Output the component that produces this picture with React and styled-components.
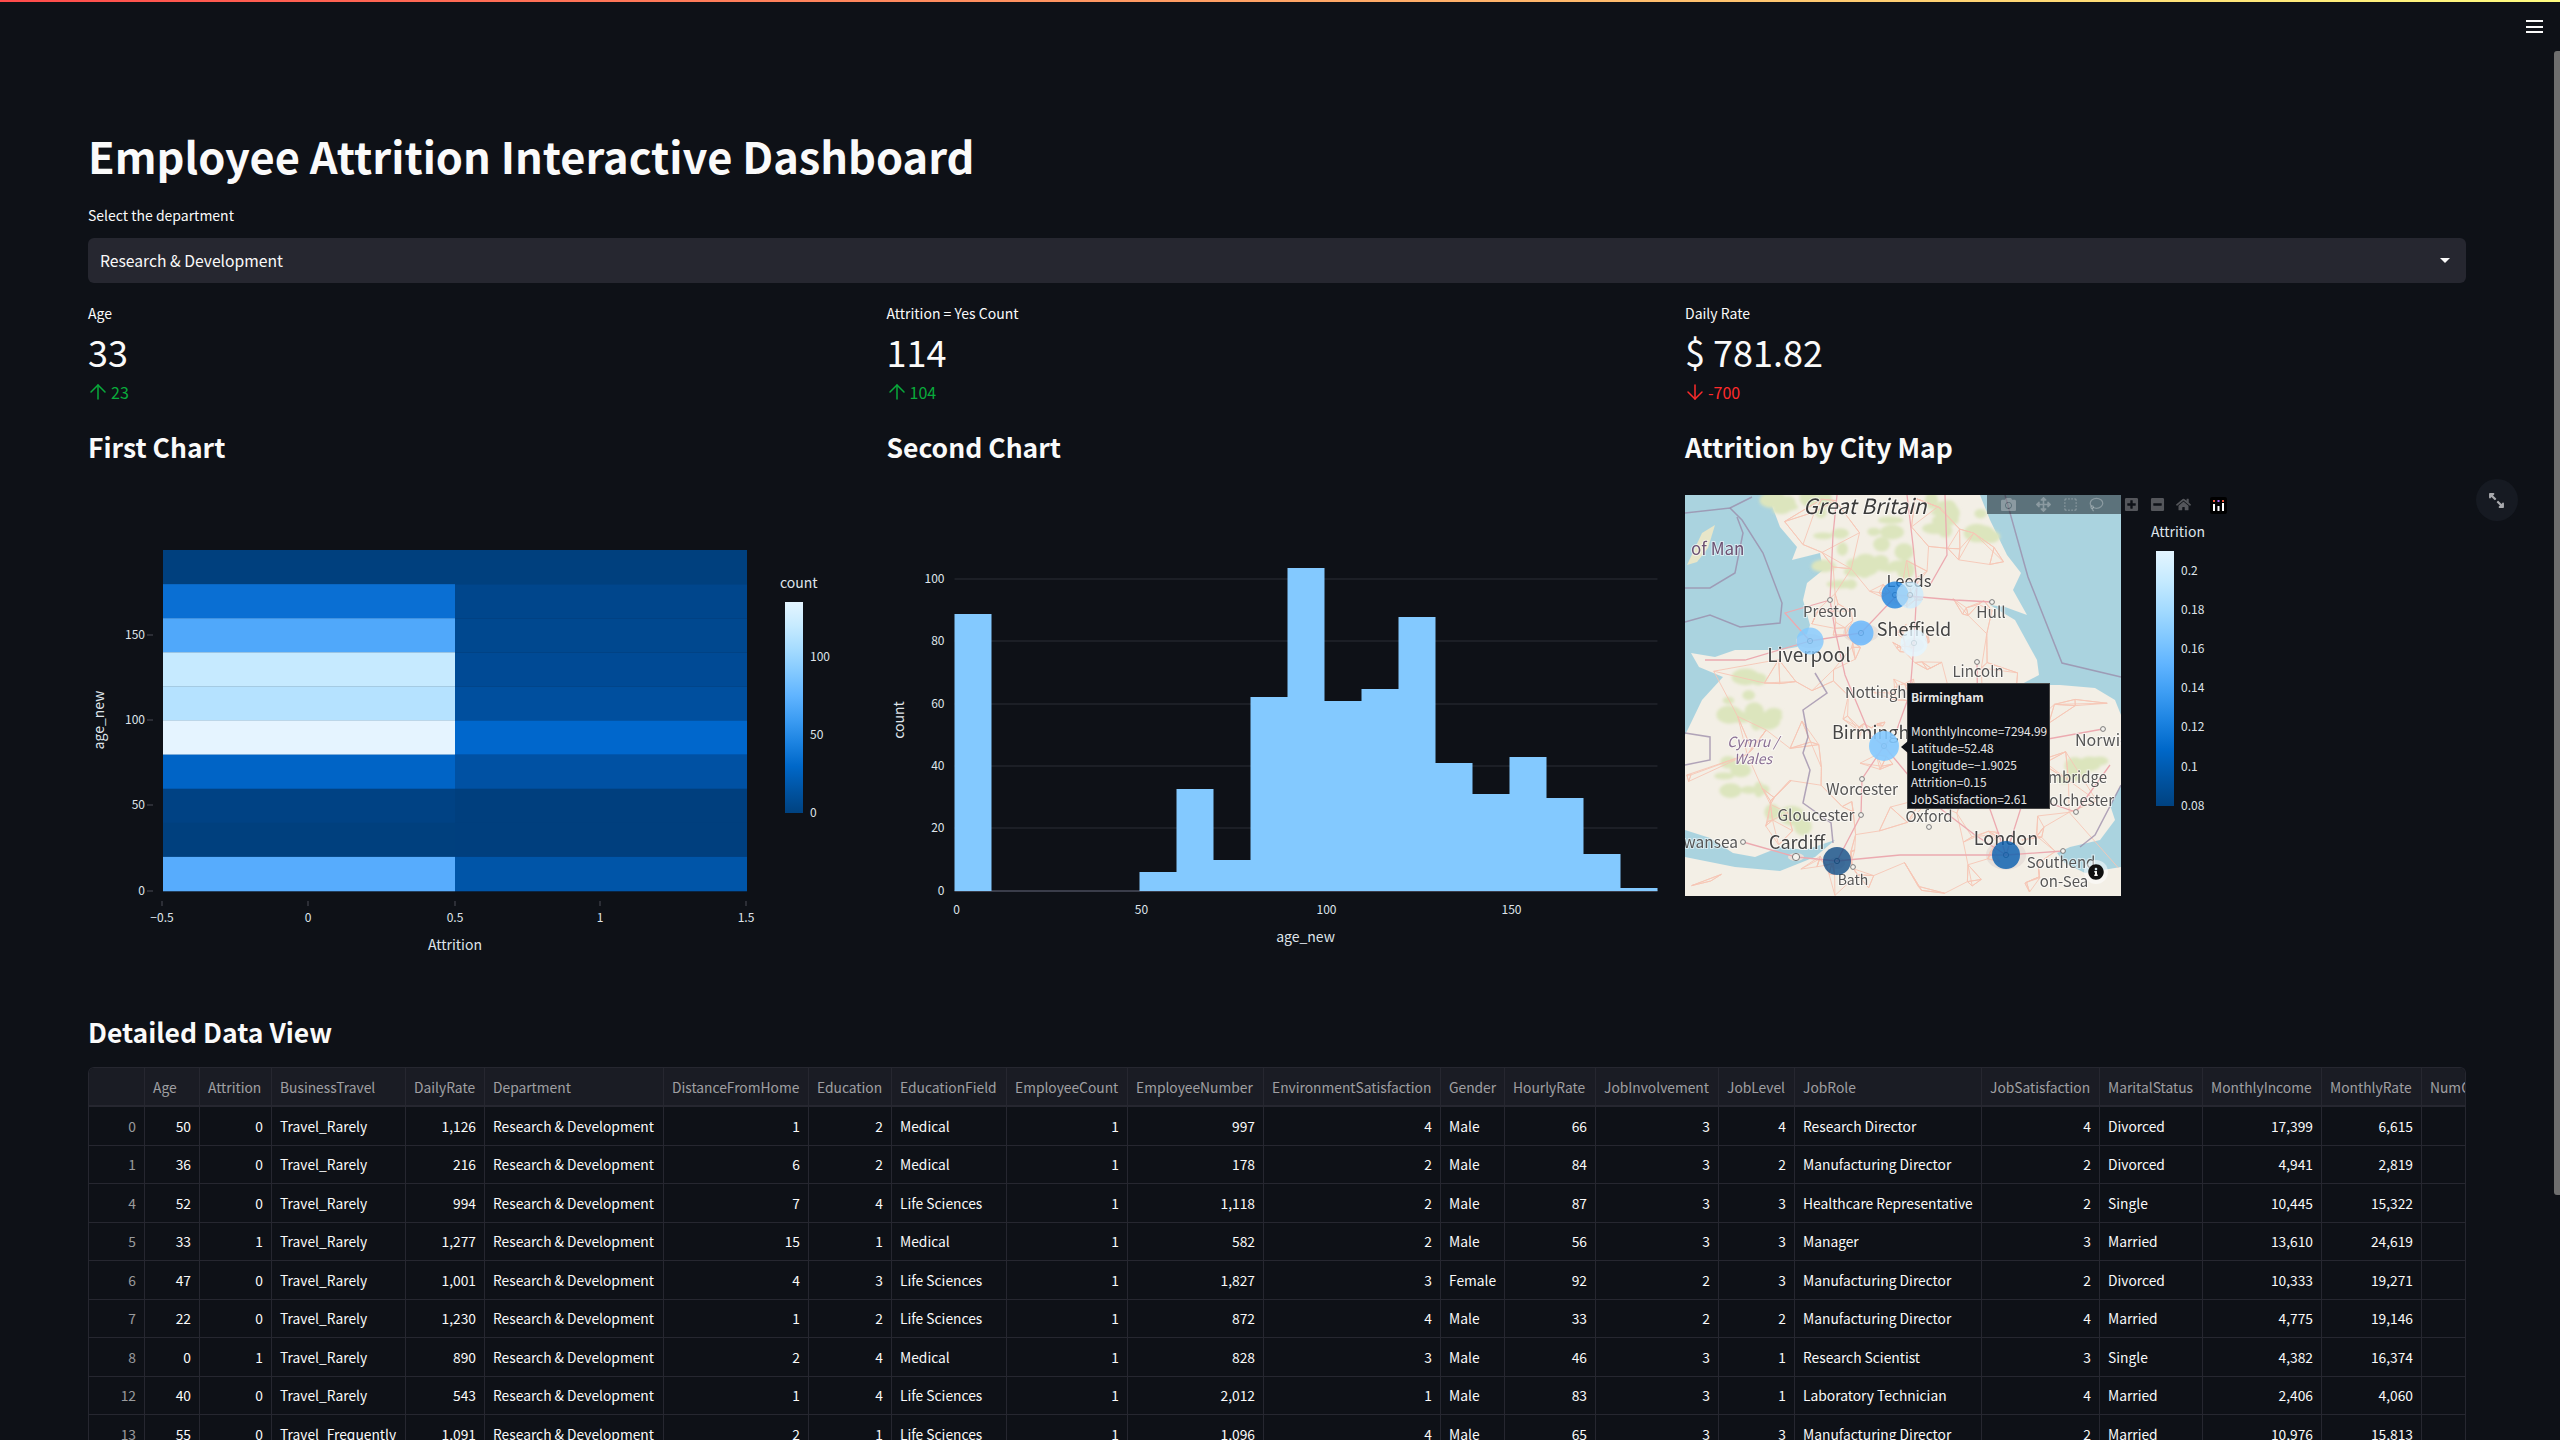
import React from 'react';
import styled, { createGlobalStyle } from 'styled-components';
import { ArrowUp, ArrowDown, Lasso, SquareDashed } from 'lucide-react';
import { FaCamera, FaArrowsAlt, FaHome, FaPlusSquare, FaMinusSquare, FaInfoCircle, FaExpandAlt } from 'react-icons/fa';

const FONT = '"Noto Sans CJK JP", "Source Sans Pro", Lato, sans-serif';

const GlobalStyle = createGlobalStyle`
    html, body {
        margin: 0;
        height: 100%;
        background: #0e1117;
        overflow: hidden;
    }
    * { box-sizing: border-box; }
`;

const Page = styled.div`
    position: relative;
    height: 1440px;
    overflow: hidden;
    background: #0e1117;
    color: #fafafa;
    font-family: ${FONT};
`;

const TopBar = styled.div`
    height: 2px;
    background: linear-gradient(90deg, #ff4b4b, #fffd80);
`;

const Menu = styled.div`
    position: absolute;
    top: 20px;
    right: 17px;
    width: 17px;
    height: 13px;
    border-top: 2px solid #fafafa;
    border-bottom: 2px solid #fafafa;
    &::after {
        content: '';
        display: block;
        margin-top: 3.5px;
        height: 2px;
        background: #fafafa;
    }
`;

const ScrollThumb = styled.div`
    position: absolute;
    top: 51px;
    right: 0;
    width: 6px;
    height: 1144px;
    border-radius: 3px 0 0 3px;
    background: #6e6e6e;
`;

const ExpandButton = styled.div`
    position: absolute;
    top: 479px;
    left: 2476px;
    width: 42px;
    height: 42px;
    border-radius: 50%;
    background: #161a22;
    color: #a8a9ad;
    display: flex;
    align-items: center;
    justify-content: center;
    font-size: 17px;
    transform: scaleX(-1);
`;

const Main = styled.main`
    padding: 126px 94px 0 88px;
`;

const Title = styled.h1`
    margin: 0;
    font-size: 43.4px;
    line-height: 54px;
    font-weight: 700;
`;

const FieldLabel = styled.label`
    display: block;
    margin-top: 23px;
    font-size: 14px;
    line-height: 20px;
`;

const SelectBox = styled.div`
    margin-top: 13px;
    height: 45px;
    padding: 0 12px;
    display: flex;
    align-items: center;
    justify-content: space-between;
    border-radius: 6px;
    background: #262730;
    font-size: 15.7px;
`;

const Caret = styled.span`
    width: 0;
    height: 0;
    margin-right: 4px;
    border-left: 5px solid transparent;
    border-right: 5px solid transparent;
    border-top: 5px solid #fafafa;
`;

const Columns = styled.div`
    display: grid;
    grid-template-columns: repeat(3, 782px);
    column-gap: 16.5px;
`;

const Metrics = styled(Columns)`
    margin-top: 20px;
`;

const MetricLabel = styled.div`
    font-size: 14px;
    line-height: 20px;
`;

const MetricValue = styled.div`
    margin-top: 6px;
    font-size: 36px;
    line-height: 45px;
`;

const MetricDelta = styled.div`
    margin-top: 8px;
    margin-left: -2px;
    height: 20px;
    display: flex;
    align-items: center;
    gap: 1px;
    font-size: 16px;
    line-height: 20px;
    color: ${(p) => (p.$down ? '#ff2b2b' : '#09ab3b')};
`;

const SectionTitle = styled.h3`
    margin: 0;
    font-size: 26.5px;
    line-height: 38px;
    font-weight: 600;
`;

const ChartsRow = styled(Columns)`
    margin-top: 26px;
`;

const ChartSvg = styled.svg`
    display: block;
    margin-top: 9px;
    width: 782px;
    height: 500px;
    font-family: ${FONT};
`;

const MapPanel = styled.div`
    position: relative;
    margin-top: 29px;
    width: 782px;
    height: 480px;
`;

const MapSvg = styled.svg`
    display: block;
    width: 436px;
    height: 401px;
    font-family: ${FONT};
`;

const LegendSvg = styled.svg`
    position: absolute;
    left: 450px;
    top: 18px;
    width: 100px;
    height: 310px;
    font-family: ${FONT};
`;

const Modebar = styled.div`
    position: absolute;
    left: 302px;
    top: 0;
    width: 246px;
    height: 19px;
    display: flex;
    align-items: center;
    background: rgba(14, 17, 23, 0.5);
`;

const ModeIcon = styled.span`
    position: absolute;
    left: ${(p) => p.$x}px;
    top: 2px;
    display: flex;
    font-size: ${(p) => p.$size || 15}px;
    color: rgba(250, 250, 250, 0.3);
`;

const Tooltip = styled.div`
    position: absolute;
    left: 222px;
    top: 188px;
    width: 143px;
    height: 126px;
    padding: 4px 0 0 3px;
    background: #0e1117;
    border: 1px solid #444;
    font-size: 11.9px;
    line-height: 17px;
    color: #e6e6e6;
    white-space: pre;
    &::before {
        content: '';
        position: absolute;
        left: -7px;
        top: 57px;
        border-top: 6px solid transparent;
        border-bottom: 6px solid transparent;
        border-right: 7px solid #0e1117;
    }
`;

const TipTitle = styled.b`
    font-weight: 700;
`;

const InfoHalo = styled.span`
    position: absolute;
    left: 399px;
    top: 365px;
    width: 24px;
    height: 24px;
    border-radius: 50%;
    background: rgba(255, 255, 255, 0.5);
    color: #111;
    display: flex;
    align-items: center;
    justify-content: center;
    font-size: 16px;
`;

const DataTitle = styled(SectionTitle)`
    margin-top: 38px;
`;

const TableWrap = styled.div`
    margin-top: 16px;
    border: 1px solid #262730;
    border-bottom: 0;
    border-radius: 6px 6px 0 0;
    overflow: hidden;
`;

const COLUMN_WIDTHS = [56, 55, 72, 134, 79, 179, 145, 83, 115, 121, 136, 177, 64, 91, 123, 76, 187, 118, 103, 119, 100, 150];

const TableGrid = styled.div`
    display: grid;
    width: max-content;
    grid-template-columns: ${COLUMN_WIDTHS.map((w) => w + 'px').join(' ')};
    grid-template-rows: 39px;
    grid-auto-rows: 38.5px;
    font-size: 13.8px;
`;

const Cell = styled.div`
    display: flex;
    align-items: center;
    justify-content: ${(p) => (p.$num ? 'flex-end' : 'flex-start')};
    padding: 0 8px;
    white-space: nowrap;
    overflow: hidden;
    border-right: 1px solid #262730;
    border-bottom: 1px solid #262730;
    color: ${(p) => (p.$index ? 'rgba(250,250,250,0.6)' : '#fafafa')};
`;

const HeadCell = styled(Cell)`
    background: #1a1c24;
    color: rgba(250, 250, 250, 0.6);
    border-bottom-width: 2px;
`;

const columns = [
    ['', 0], ['Age', 1], ['Attrition', 1], ['BusinessTravel', 0], ['DailyRate', 1], ['Department', 0],
    ['DistanceFromHome', 1], ['Education', 1], ['EducationField', 0], ['EmployeeCount', 1], ['EmployeeNumber', 1],
    ['EnvironmentSatisfaction', 1], ['Gender', 0], ['HourlyRate', 1], ['JobInvolvement', 1], ['JobLevel', 1],
    ['JobRole', 0], ['JobSatisfaction', 1], ['MaritalStatus', 0], ['MonthlyIncome', 1], ['MonthlyRate', 1], ['NumCompaniesWorked', 1],
];

const RD = 'Research & Development';
const rows = [
    ['0', '50', '0', 'Travel_Rarely', '1,126', RD, '1', '2', 'Medical', '1', '997', '4', 'Male', '66', '3', '4', 'Research Director', '4', 'Divorced', '17,399', '6,615', ''],
    ['1', '36', '0', 'Travel_Rarely', '216', RD, '6', '2', 'Medical', '1', '178', '2', 'Male', '84', '3', '2', 'Manufacturing Director', '2', 'Divorced', '4,941', '2,819', ''],
    ['4', '52', '0', 'Travel_Rarely', '994', RD, '7', '4', 'Life Sciences', '1', '1,118', '2', 'Male', '87', '3', '3', 'Healthcare Representative', '2', 'Single', '10,445', '15,322', ''],
    ['5', '33', '1', 'Travel_Rarely', '1,277', RD, '15', '1', 'Medical', '1', '582', '2', 'Male', '56', '3', '3', 'Manager', '3', 'Married', '13,610', '24,619', ''],
    ['6', '47', '0', 'Travel_Rarely', '1,001', RD, '4', '3', 'Life Sciences', '1', '1,827', '3', 'Female', '92', '2', '3', 'Manufacturing Director', '2', 'Divorced', '10,333', '19,271', ''],
    ['7', '22', '0', 'Travel_Rarely', '1,230', RD, '1', '2', 'Life Sciences', '1', '872', '4', 'Male', '33', '2', '2', 'Manufacturing Director', '4', 'Married', '4,775', '19,146', ''],
    ['8', '0', '1', 'Travel_Rarely', '890', RD, '2', '4', 'Medical', '1', '828', '3', 'Male', '46', '3', '1', 'Research Scientist', '3', 'Single', '4,382', '16,374', ''],
    ['12', '40', '0', 'Travel_Rarely', '543', RD, '1', '4', 'Life Sciences', '1', '2,012', '1', 'Male', '83', '3', '1', 'Laboratory Technician', '4', 'Married', '2,406', '4,060', ''],
    ['13', '55', '0', 'Travel_Frequently', '1,091', RD, '2', '1', 'Life Sciences', '1', '1,096', '4', 'Male', '65', '3', '3', 'Manufacturing Director', '2', 'Married', '10,976', '15,813', ''],
];

const metrics = [
    { label: 'Age', value: '33', delta: '23' },
    { label: 'Attrition = Yes Count', value: '114', delta: '104' },
    { label: 'Daily Rate', value: '$ 781.82', delta: '-700', down: true },
];

const TICK = '#dfe4ea';
const BLUES = ['#e4f5ff', '#c7ebff', '#a6dcff', '#83c9ff', '#60b4ff', '#3d9df3', '#1c83e1', '#0068c9', '#0054a3', '#004280'];

function GradientStops() {
    return BLUES.map((c, i) => <stop key={c} offset={i / (BLUES.length - 1)} stopColor={c} />);
}

const heatRows = [
    ['#00407e', '#00407e'],
    ['#0a6fd3', '#00468c'],
    ['#50a8fa', '#00488f'],
    ['#c6eaff', '#004a95'],
    ['#b5e2ff', '#004f9e'],
    ['#e5f4ff', '#0067cc'],
    ['#0064c6', '#0051a3'],
    ['#004284', '#003f7e'],
    ['#00407e', '#003f7e'],
    ['#57acfd', '#0055a8'],
];

function HeatChart() {
    const top = 550;
    const rowH = 34.1;
    return (
        <ChartSvg viewBox="88 475 782 500">
            <defs>
                <linearGradient id="heatbar" x1="0" y1="0" x2="0" y2="1"><GradientStops /></linearGradient>
            </defs>
            {heatRows.map((r, i) => (
                <g key={i}>
                    <rect x="163" y={top + i * rowH} width="292" height={rowH + 0.3} fill={r[0]} />
                    <rect x="455" y={top + i * rowH} width="292" height={rowH + 0.3} fill={r[1]} />
                </g>
            ))}
            {[[150, 635], [100, 720], [50, 805], [0, 891]].map(([t, y]) => (
                <g key={t}>
                    <line x1="147" x2="153" y1={y} y2={y} stroke="#4a4d57" />
                    <text x="145" y={y + 4} textAnchor="end" fontSize="12" fill={TICK}>{t}</text>
                </g>
            ))}
            {[['−0.5', 162], ['0', 308], ['0.5', 455], ['1', 600], ['1.5', 746]].map(([t, x]) => (
                <g key={t}>
                    <line x1={x} x2={x} y1="901" y2="906" stroke="#4a4d57" />
                    <text x={x} y="922" textAnchor="middle" fontSize="12" fill={TICK}>{t}</text>
                </g>
            ))}
            <text x="455" y="950" textAnchor="middle" fontSize="14" fill={TICK}>Attrition</text>
            <text transform="translate(104 720) rotate(-90)" textAnchor="middle" fontSize="14" fill={TICK}>age_new</text>
            <text x="780" y="588" fontSize="14" fill={TICK}>count</text>
            <rect x="785" y="602" width="18" height="211" fill="url(#heatbar)" />
            {[[100, 657], [50, 735], [0, 813]].map(([t, y]) => (
                <text key={t} x="810" y={y + 4} fontSize="12" fill={TICK}>{t}</text>
            ))}
        </ChartSvg>
    );
}

const histTops = [614, 891, 891, 891, 891, 872, 789, 860, 697, 568, 701, 689, 617, 763, 794, 757, 798, 854, 888];

function HistChart() {
    const x0 = 954;
    const step = 37;
    let d = `M${x0} 891`;
    histTops.forEach((t, i) => {
        d += ` L${x0 + i * step} ${t} L${x0 + (i + 1) * step} ${t}`;
    });
    d += ` L${x0 + histTops.length * step} 891 Z`;
    return (
        <ChartSvg viewBox="886.5 475 782 500">
            {[[100, 579], [80, 641], [60, 704], [40, 766], [20, 828], [0, 891]].map(([t, y]) => (
                <g key={t}>
                    <line x1="954" x2="1657" y1={y} y2={y} stroke={t === 0 ? '#3a3d4a' : '#2b2e37'} strokeWidth={t === 0 ? 2 : 1} />
                    <text x="944" y={y + 4} textAnchor="end" fontSize="12" fill={TICK}>{t}</text>
                </g>
            ))}
            <path d={d} fill="#83c9ff" />
            {[[0, 956], [50, 1141], [100, 1326], [150, 1511]].map(([t, x]) => (
                <text key={t} x={x} y="914" textAnchor="middle" fontSize="12" fill={TICK}>{t}</text>
            ))}
            <text x="1305" y="942" textAnchor="middle" fontSize="14" fill={TICK}>age_new</text>
            <text transform="translate(903 720) rotate(-90)" textAnchor="middle" fontSize="14" fill={TICK}>count</text>
        </ChartSvg>
    );
}

const LAND = 'M83 0 L295 0 L305 25 L322 60 L336 78 L328 95 L342 120 L320 112 L305 110 L330 125 L352 165 L354 180 L335 190 L345 190 L375 190 L410 193 L430 205 L436 220 L436 290 L425 310 L430 325 L415 345 L385 352 L372 358 L380 368 L400 378 L436 372 L436 401 L0 401 L0 362 L50 372 L95 376 L130 362 L150 345 L120 355 L95 352 L70 362 L48 358 L25 343 L0 335 L0 240 L4 232 L17 205 L38 182 L14 172 L6 158 L30 162 L50 155 L95 155 L112 152 L120 145 L125 130 L118 105 L122 88 L138 75 L135 58 L107 65 L112 52 L95 32 Z';

const landPoints = LAND.match(/[\d.]+ [\d.]+/g).map((s) => s.split(' ').map(Number));

function onLand(x, y) {
    let inside = false;
    for (let i = 0, j = landPoints.length - 1; i < landPoints.length; j = i++) {
        const [xi, yi] = landPoints[i];
        const [xj, yj] = landPoints[j];
        if (yi > y !== yj > y && x < ((xj - xi) * (y - yi)) / (yj - yi) + xi) inside = !inside;
    }
    return inside;
}

// small repeatable random so the road mesh is the same on each load
let seed = 4217;
function rnd() {
    seed = (seed * 1103515245 + 12345) % 2147483648;
    return seed / 2147483648;
}

const greenAreas = [
    [112, 22, 28, 20, 10], [188, 52, 36, 30, 16], [150, 80, 16, 12, 5], [278, 30, 28, 16, 10], [250, 12, 20, 8, 5],
    [70, 205, 28, 26, 12], [60, 282, 22, 22, 8], [100, 320, 18, 12, 5], [395, 275, 20, 10, 5], [300, 215, 14, 8, 3],
];

const greens = [];
greenAreas.forEach(([cx, cy, rx, ry, n]) => {
    for (let i = 0; i < n; i++) {
        const x = cx + (rnd() * 2 - 1) * rx;
        const y = cy + (rnd() * 2 - 1) * ry;
        if (onLand(x, y)) greens.push([x, y, 5 + rnd() * 9, 3 + rnd() * 7]);
    }
});

const urban = [
    [125, 146, 14, 7], [176, 138, 18, 10], [212, 102, 16, 8], [229, 150, 10, 7], [199, 251, 14, 10],
    [321, 360, 20, 15], [152, 368, 8, 6], [111, 362, 8, 4], [225, 198, 8, 6],
];

const cityCentres = [
    [145, 135, 45, 22], [212, 100, 30, 14], [229, 150, 22, 14], [199, 251, 32, 24], [321, 360, 44, 30], [152, 366, 22, 14], [225, 198, 22, 14],
];

const nodes = [];
while (nodes.length < 150) {
    const x = rnd() * 436;
    const y = rnd() * 401;
    if (onLand(x, y)) nodes.push([x, y]);
}
cityCentres.forEach(([cx, cy, rx, ry]) => {
    for (let i = 0; i < 18; i++) {
        const x = cx + (rnd() * 2 - 1) * rx;
        const y = cy + (rnd() * 2 - 1) * ry;
        if (onLand(x, y)) nodes.push([x, y]);
    }
});

const edges = [];
nodes.forEach((a, i) => {
    nodes
        .map((b, j) => [Math.hypot(a[0] - b[0], a[1] - b[1]), j])
        .filter((n) => n[1] !== i)
        .sort((p, q) => p[0] - q[0])
        .slice(0, 3)
        .forEach((n) => {
            const b = nodes[n[1]];
            if (onLand((a[0] + b[0]) / 2, (a[1] + b[1]) / 2)) edges.push([a, b]);
        });
});

const mainRoads = [
    'M152 0 L148 40 L145 105 L150 135 L160 180 L185 240 L199 251',
    'M222 0 L228 50 L232 90 L229 148 L225 198 L210 240 L199 251',
    'M125 146 L176 138 L212 100 L270 105 L307 107',
    'M199 251 L244 305 L290 340 L321 360',
    'M199 251 L177 284 L176 320 L152 366 L111 362 L58 347',
    'M152 366 L215 360 L321 360 L378 356',
    'M225 198 L270 215 L330 250 L418 234',
    'M321 360 L340 300 L391 317 L425 270',
    'M321 360 L300 300 L293 240 L292 167',
    'M145 105 L100 118 L125 146 L60 165 L20 165',
    'M260 0 L262 60 L245 90',
];

const boundaries = [
    'M0 18 L45 13 L57 25 L78 58 L97 108 L95 128 L55 132 L25 120 L0 127',
    'M0 93 L25 93 L50 78 L58 38 L52 22',
    'M45 13 L67 2',
    'M130 178 L142 198 L118 215 L123 242 L118 258 L125 275 L118 308 L146 328 L148 348',
    'M0 238 L25 242 L25 265 L0 270',
    'M320 0 L343 82 L377 168 L436 182',
    'M436 290 L410 340 L395 352',
];

const mapLabels = [
    ['Great Britain', 180, 19, 21, 'middle', '#3a3a3a', true],
    ['of Man', 6, 60, 17, 'start', '#6d5172', false],
    ['Leeds', 224, 92, 16.5, 'middle', '#444', false],
    ['Preston', 145, 122, 15, 'middle', '#555', false],
    ['Hull', 306, 123, 15.5, 'middle', '#555', false],
    ['Sheffield', 229, 141, 18, 'middle', '#444', false],
    ['Liverpool', 124, 167, 19, 'middle', '#444', false],
    ['Lincoln', 293, 182, 15, 'middle', '#555', false],
    ['Nottingham', 160, 203, 15, 'start', '#555', false],
    ['Birmingham', 147, 244, 18, 'start', '#444', false],
    ['Norwich', 390, 251, 16, 'start', '#555', false],
    ['Cymru /', 68, 252, 14, 'middle', '#8a6f94', true],
    ['Wales', 68, 269, 14, 'middle', '#8a6f94', true],
    ['Cambridge', 422, 288, 15, 'end', '#555', false],
    ['Colchester', 429, 311, 15, 'end', '#555', false],
    ['Worcester', 177, 300, 15.5, 'middle', '#555', false],
    ['Gloucester', 131, 326, 15.5, 'middle', '#555', false],
    ['Oxford', 244, 327, 15, 'middle', '#555', false],
    ['Swansea', 53, 353, 15.5, 'end', '#555', false],
    ['Cardiff', 112, 354, 18, 'middle', '#444', false],
    ['London', 321, 350, 18, 'middle', '#444', false],
    ['Southend', 376, 373, 15, 'middle', '#555', false],
    ['on-Sea', 379, 392, 15, 'middle', '#555', false],
    ['Bath', 168, 390, 14, 'middle', '#555', false],
];

const towns = [
    [145, 105], [307, 107], [292, 167], [418, 234], [177, 284], [176, 320], [244, 332], [391, 317], [58, 347], [168, 372], [378, 356],
];

const bubbles = [
    [210, 100, 13.5, '#1c83e1', 0.8],
    [225, 100, 13.5, '#c7ebff', 0.7],
    [176, 138, 12.5, '#60b4ff', 0.8],
    [125, 146, 13.5, '#83c9ff', 0.8],
    [229, 148, 13.5, '#e4f5ff', 0.8],
    [199, 251, 15, '#83c9ff', 0.9],
    [152, 366, 14, '#004280', 0.75],
    [321, 360, 14, '#0a5fb0', 0.82],
];

function MapChart() {
    return (
        <MapSvg viewBox="0 0 436 401">
            <defs>
                <filter id="soft"><feGaussianBlur stdDeviation="0.4" /></filter>
                <filter id="softer"><feGaussianBlur stdDeviation="1.6" /></filter>
            </defs>
            <rect width="436" height="401" fill="#aad3df" />
            <g filter="url(#soft)">
                <path d={LAND} fill="#f3efe6" />
                <path d="M2 70 L17 38 L30 30 L23 53 L12 67 Z" fill="#e8e6c9" />
                <g filter="url(#softer)">
                    {greens.map((g, i) => <ellipse key={i} cx={g[0]} cy={g[1]} rx={g[2]} ry={g[3]} fill="#dce5bd" />)}
                </g>
                {urban.map((u, i) => <ellipse key={i} cx={u[0]} cy={u[1]} rx={u[2]} ry={u[3]} fill="#e8e0da" />)}
                {edges.map(([a, b], i) => (
                    <line key={i} x1={a[0]} y1={a[1]} x2={b[0]} y2={b[1]} stroke="#f6c6b6" strokeWidth="0.9" />
                ))}
                {mainRoads.map((d) => <path key={d} d={d} fill="none" stroke="#ecaab0" strokeWidth="1.3" />)}
                {boundaries.map((d) => <path key={d} d={d} fill="none" stroke="#9a8aa8" strokeWidth="1.5" opacity="0.75" />)}
                {towns.map(([x, y]) => <circle key={x} cx={x} cy={y} r="2.4" fill="#f5f3ee" stroke="#7b7b7b" />)}
                <circle cx="111" cy="362" r="3.6" fill="#f5f3ee" stroke="#7b7b7b" />
                {mapLabels.map(([t, x, y, size, anchor, fill, italic]) => (
                    <text
                        key={t}
                        x={x}
                        y={y}
                        fontSize={size}
                        textAnchor={anchor}
                        fill={fill}
                        fontStyle={italic ? 'italic' : 'normal'}
                        stroke="#fff"
                        strokeOpacity="0.55"
                        strokeWidth="2"
                        paintOrder="stroke"
                    >
                        {t}
                    </text>
                ))}
                {bubbles.map(([x, y, r, c, o]) => (
                    <g key={x + '' + y}>
                        <circle cx={x} cy={y} r="2.6" fill="none" stroke="#6b6b6b" />
                        <circle cx={x} cy={y} r={r} fill={c} opacity={o} />
                    </g>
                ))}
            </g>
        </MapSvg>
    );
}

function MapLegend() {
    return (
        <LegendSvg viewBox="0 0 100 310">
            <defs>
                <linearGradient id="mapbar" x1="0" y1="0" x2="0" y2="1"><GradientStops /></linearGradient>
            </defs>
            <text x="16" y="24" fontSize="14" fill={TICK}>Attrition</text>
            <rect x="21" y="38" width="18" height="255" fill="url(#mapbar)" />
            {[['0.2', 58], ['0.18', 97], ['0.16', 136], ['0.14', 175], ['0.12', 214], ['0.1', 254], ['0.08', 293]].map(([t, y]) => (
                <text key={t} x="46" y={y + 4} fontSize="12" fill={TICK}>{t}</text>
            ))}
        </LegendSvg>
    );
}

function PlotlyMark() {
    return (
        <svg width="17" height="17" viewBox="0 0 17 17">
            <rect width="17" height="17" rx="2" fill="#000" />
            <rect x="3" y="7" width="2" height="7" fill="#fff" />
            <rect x="7.5" y="9" width="2" height="5" fill="#fff" />
            <rect x="12" y="6" width="2" height="8" fill="#fff" />
            <rect x="3" y="3" width="2" height="2" fill="#ef553b" />
            <rect x="7.5" y="3" width="2" height="2" fill="#ab63fa" />
            <rect x="12" y="3" width="2" height="2" fill="#ef553b" />
        </svg>
    );
}

function App() {
    return (
        <Page>
            <GlobalStyle />
            <TopBar />
            <Menu />
            <ScrollThumb />
            <ExpandButton><FaExpandAlt /></ExpandButton>
            <Main>
                <Title>Employee Attrition Interactive Dashboard</Title>
                <FieldLabel>Select the department</FieldLabel>
                <SelectBox>{RD}<Caret /></SelectBox>
                <Metrics>
                    {metrics.map((m) => (
                        <div key={m.label}>
                            <MetricLabel>{m.label}</MetricLabel>
                            <MetricValue>{m.value}</MetricValue>
                            <MetricDelta $down={m.down}>
                                {m.down ? <ArrowDown size={24} strokeWidth={1.5} /> : <ArrowUp size={24} strokeWidth={1.5} />}
                                {m.delta}
                            </MetricDelta>
                        </div>
                    ))}
                </Metrics>
                <ChartsRow>
                    <div>
                        <SectionTitle>First Chart</SectionTitle>
                        <HeatChart />
                    </div>
                    <div>
                        <SectionTitle>Second Chart</SectionTitle>
                        <HistChart />
                    </div>
                    <div>
                        <SectionTitle>Attrition by City Map</SectionTitle>
                        <MapPanel>
                            <MapChart />
                            <MapLegend />
                            <Modebar>
                                <ModeIcon $x={14}><FaCamera /></ModeIcon>
                                <ModeIcon $x={49}><FaArrowsAlt /></ModeIcon>
                                <ModeIcon $x={76}><SquareDashed size={15} /></ModeIcon>
                                <ModeIcon $x={102}><Lasso size={15} /></ModeIcon>
                                <ModeIcon $x={137}><FaPlusSquare /></ModeIcon>
                                <ModeIcon $x={163}><FaMinusSquare /></ModeIcon>
                                <ModeIcon $x={189}><FaHome /></ModeIcon>
                                <ModeIcon $x={223}><PlotlyMark /></ModeIcon>
                            </Modebar>
                            <Tooltip>
                                <TipTitle>Birmingham</TipTitle>
                                {'\n\nMonthlyIncome=7294.99\nLatitude=52.48\nLongitude=−1.9025\nAttrition=0.15\nJobSatisfaction=2.61'}
                            </Tooltip>
                            <InfoHalo><FaInfoCircle /></InfoHalo>
                        </MapPanel>
                    </div>
                </ChartsRow>
                <DataTitle>Detailed Data View</DataTitle>
                <TableWrap>
                    <TableGrid>
                        {columns.map(([name]) => (
                            <HeadCell key={name || 'index'}>{name}</HeadCell>
                        ))}
                        {rows.map((row) => row.map((v, i) => (
                            <Cell key={row[0] + '-' + i} $num={columns[i][1] === 1 || i === 0} $index={i === 0}>{v}</Cell>
                        )))}
                    </TableGrid>
                </TableWrap>
            </Main>
        </Page>
    );
}

export default App;
